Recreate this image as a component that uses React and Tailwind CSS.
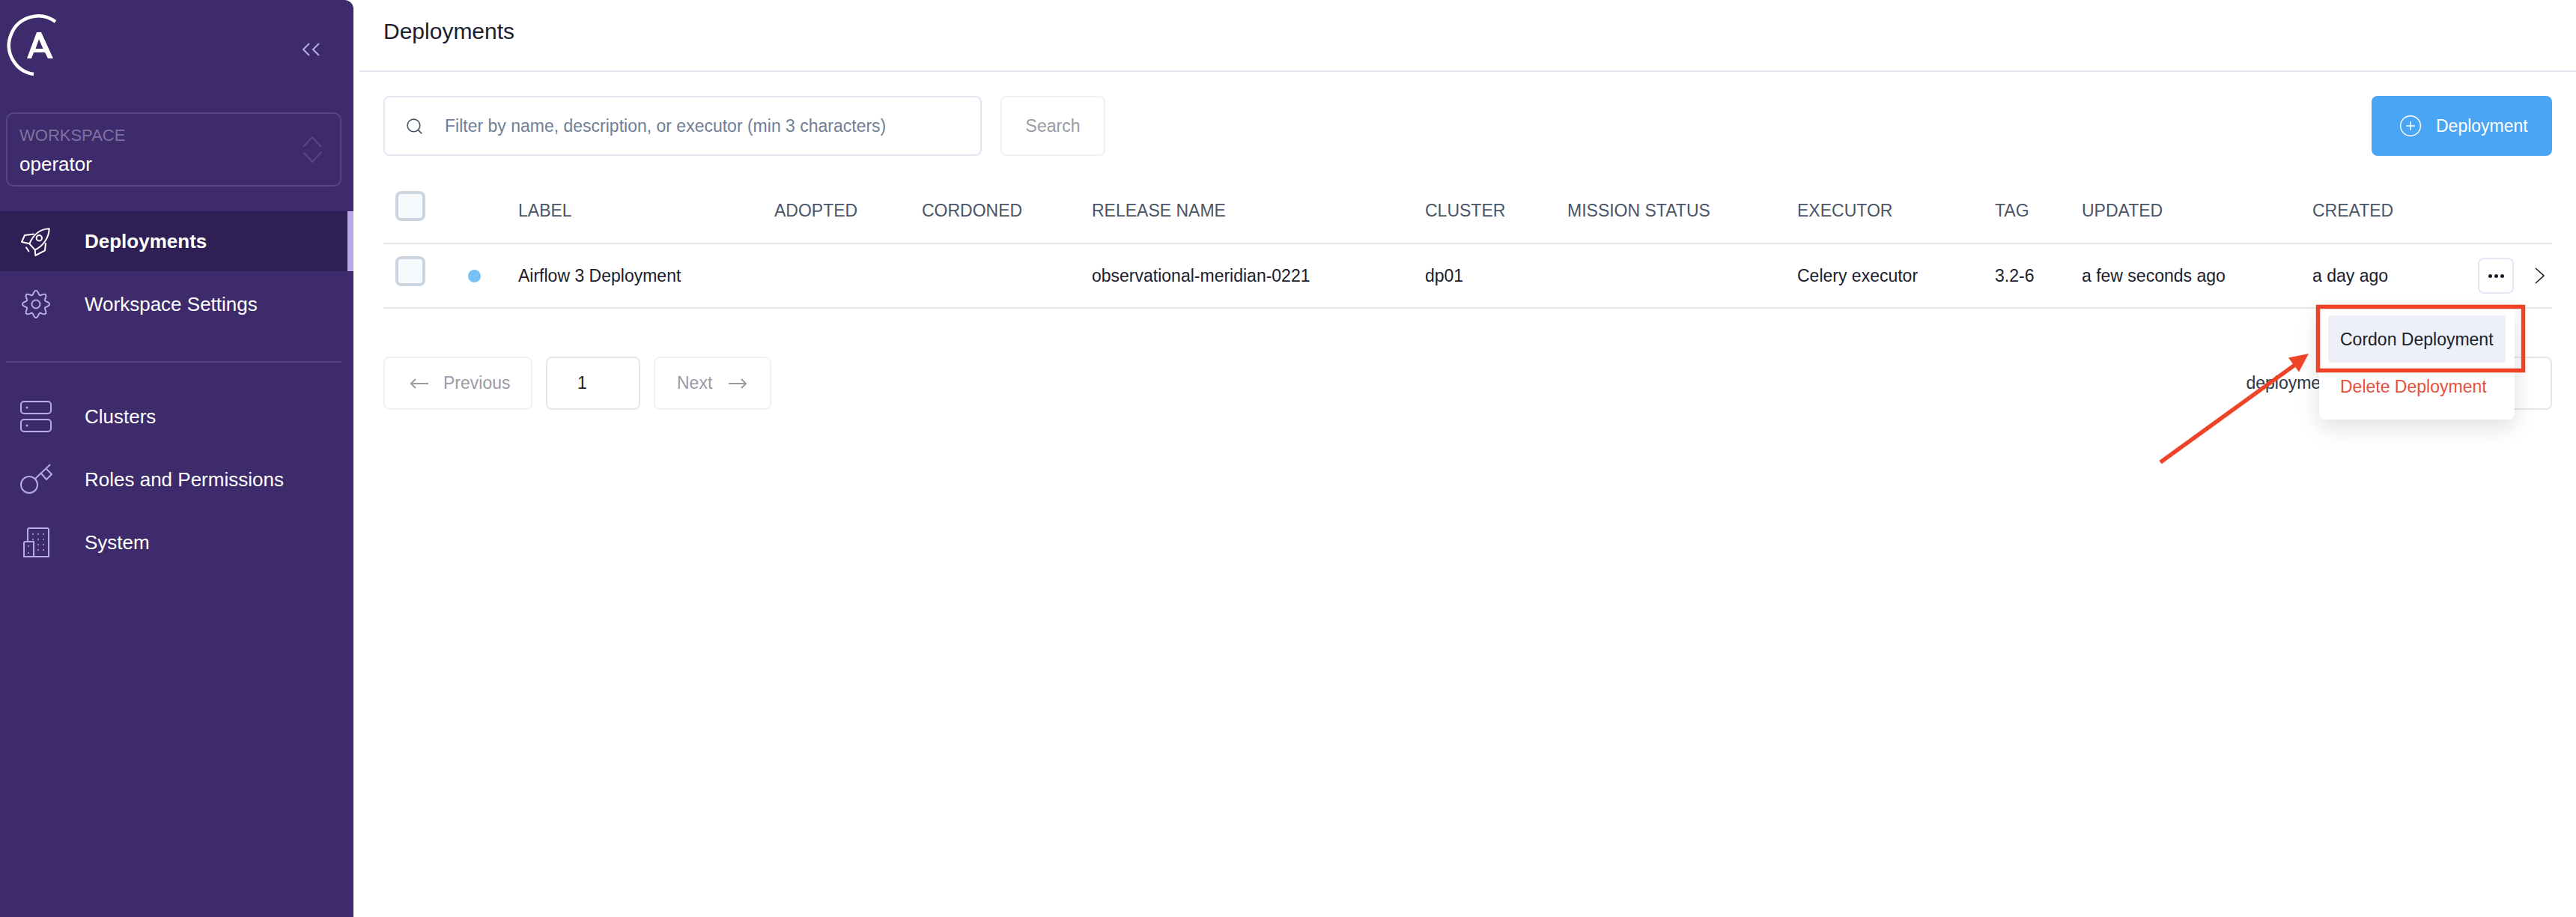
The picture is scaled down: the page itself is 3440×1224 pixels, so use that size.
// Deployments list page with the row menu open and a red callout on "Cordon Deployment".
import { CirclePlus, Search } from 'lucide-react';

const COLS = 'grid grid-cols-[180px_342px_197px_227px_445px_190px_307px_264px_116px_308px_1fr] items-center';

const HEADERS = ['LABEL', 'ADOPTED', 'CORDONED', 'RELEASE NAME', 'CLUSTER', 'MISSION STATUS', 'EXECUTOR', 'TAG', 'UPDATED', 'CREATED'];

const ROW = ['Airflow 3 Deployment', '', '', 'observational-meridian-0221', 'dp01', '', 'Celery executor', '3.2-6', 'a few seconds ago'];

// eight soft lobes around a centre, sampled into a closed path
const GEAR_PATH = (() => {
    const pts = [];
    for (let i = 0; i < 96; i++) {
        const a = (i / 96) * Math.PI * 2 - Math.PI / 2;
        const r = 15.5 + 2.6 * Math.cos(8 * (a + Math.PI / 2));
        pts.push(`${(22 + r * Math.cos(a)).toFixed(2)} ${(22 + r * Math.sin(a)).toFixed(2)}`);
    }
    return `M${pts.join('L')}Z`;
})();

function Logo() {
    return (
        <svg width="90" height="132" viewBox="0 0 90 132" fill="none">
            <path d="M74 29A39 39 0 1 0 45 99" stroke="white" strokeWidth="4.5" />
            <path
                fill="white"
                fillRule="evenodd"
                d="M49 43H55L71 78H64L60 70H45L42 78H36ZM47.5 65H57.5L52 52.5Z"
            />
        </svg>
    );
}

function RocketIcon() {
    return (
        <svg width="44" height="44" viewBox="-2 -2 44 44" fill="none" stroke="white" strokeWidth="2" strokeLinejoin="round" strokeLinecap="round">
            <path d="M37.7 3.3C27 3.5 17 10 11.3 23.3L18.7 31.7C30 26 37.5 15 37.7 3.3Z" />
            <path d="M17 10.5L5 12L1 21L11.3 23.3" />
            <path d="M18.7 31.7L19.3 39L32 32.3L33 23" />
            <path d="M7 28.3L10.3 33.3" />
            <circle cx="24.3" cy="15.7" r="3.7" />
        </svg>
    );
}

function GearIcon() {
    return (
        <svg width="44" height="44" viewBox="0 0 44 44" fill="none" stroke="#b9a9e6" strokeWidth="2">
            <path d={GEAR_PATH} />
            <circle cx="22" cy="22" r="5.5" />
        </svg>
    );
}

function ClustersIcon() {
    return (
        <svg width="44" height="44" viewBox="0 0 44 44" fill="none" stroke="#b9a9e6" strokeWidth="2">
            <rect x="2" y="2" width="40" height="16" rx="4" />
            <rect x="2" y="26" width="40" height="16" rx="4" />
            <circle cx="10" cy="10" r="0.6" fill="#b9a9e6" />
            <circle cx="10" cy="34" r="0.6" fill="#b9a9e6" />
        </svg>
    );
}

function KeyIcon() {
    return (
        <svg width="44" height="44" viewBox="0 0 44 44" fill="none" stroke="#b9a9e6" strokeWidth="2">
            <circle cx="13" cy="29" r="11" />
            <path d="M21 21L41 2" />
            <path d="M29 14L36 22L43 15L36 8" />
        </svg>
    );
}

function SystemIcon() {
    const dots = [
        [18, 11], [25, 11], [32, 11], [18, 18], [25, 18], [32, 18],
        [25, 25], [32, 25], [25, 32], [32, 32], [12, 27], [12, 36],
    ];
    return (
        <svg width="44" height="44" viewBox="0 0 44 44" fill="none" stroke="#b9a9e6" strokeWidth="2">
            <path d="M11 21V5Q11 3 13 3H37Q39 3 39 5V41H6V23Q6 21 8 21H19V41" />
            {dots.map(([x, y]) => (
                <circle key={`${x}-${y}`} cx={x} cy={y} r="1" fill="#b9a9e6" stroke="none" />
            ))}
        </svg>
    );
}

function NavItem({ icon, label, active = false }) {
    return (
        <div className={`relative flex h-[80px] items-center pl-[26px] text-[26px] text-white ${active ? 'bg-[#2e2054] font-bold' : ''}`}>
            {icon}
            <span className="ml-[43px]">{label}</span>
            {active && <div className="absolute right-0 top-0 h-full w-2 bg-[#b9a9e6]" />}
        </div>
    );
}

function Checkbox() {
    return <div className="mb-3 ml-[16px] h-10 w-10 rounded-lg border-4 border-[#cbd5e0] bg-[#f7fafc]" />;
}

function PageArrow({ flip = false }) {
    return (
        <svg width="24" height="14" viewBox="0 0 24 14" fill="none" stroke="#9a9aa5" strokeWidth="2" className={flip ? 'rotate-180' : ''}>
            <path d="M24 7H1M7 1L1 7L7 13" />
        </svg>
    );
}

export default function App() {
    return (
        <div className="relative flex h-screen w-full overflow-hidden bg-white font-['Liberation_Sans',Arial,sans-serif] text-[23px] text-[#1a202c]">
            <aside className="flex w-[472px] shrink-0 flex-col rounded-tr-xl bg-[#3d2b6b]">
                <div className="flex h-[132px] items-center justify-between pr-[44px]">
                    <Logo />
                    <svg width="24" height="20" viewBox="0 0 24 20" fill="none" stroke="#b9a9e6" strokeWidth="2">
                        <path d="M9 2L1 10L9 18M22 2L14 10L22 18" />
                    </svg>
                </div>
                <div className="ml-2 mr-4 mt-[18px] flex h-[99px] items-center justify-between rounded-[10px] border-2 border-[#58487f] pl-4 pr-[24px]">
                    <div>
                        <div className="text-[22px] leading-[38px] text-[#7f72a0]">WORKSPACE</div>
                        <div className="text-[26px] leading-[38px] text-white">operator</div>
                    </div>
                    <svg width="26" height="36" viewBox="0 0 26 36" fill="none" stroke="#58487f" strokeWidth="2">
                        <path d="M1 14L13 1L25 14M1 21L13 34L25 21" />
                    </svg>
                </div>
                <nav className="mt-[33px] flex flex-col gap-1">
                    <NavItem active icon={<RocketIcon />} label="Deployments" />
                    <NavItem icon={<GearIcon />} label="Workspace Settings" />
                </nav>
                <div className="ml-2 mr-4 mt-9 h-0.5 bg-[#58487f]" />
                <nav className="mt-8 flex flex-col gap-1">
                    <NavItem icon={<ClustersIcon />} label="Clusters" />
                    <NavItem icon={<KeyIcon />} label="Roles and Permissions" />
                    <NavItem icon={<SystemIcon />} label="System" />
                </nav>
            </aside>

            <main className="min-w-0 flex-1 pl-2">
                <header className="flex h-[96px] items-center border-b-2 border-[#e2e8f0] pb-3 pl-8 text-[30px]">
                    Deployments
                </header>
                <div className="px-8 pt-8">
                    <div className="flex h-20 items-center">
                        <div className="flex h-20 w-[799px] items-center rounded-lg border-2 border-[#e2e8f0] pl-[27px]">
                            <Search size={25} strokeWidth={1.5} className="text-[#4a5568]" />
                            <span className="ml-[28px] text-[#718096]">Filter by name, description, or executor (min 3 characters)</span>
                        </div>
                        <button className="ml-[25px] h-20 w-[140px] rounded-lg border-2 border-[#edf2f7] text-[#9a9ba3]">Search</button>
                        <button className="ml-auto flex h-20 w-[241px] items-center rounded-lg bg-[#4aa5f5] pl-[36px] text-white">
                            <CirclePlus size={32} strokeWidth={1.1} />
                            <span className="ml-[18px]">Deployment</span>
                        </button>
                    </div>

                    <div className={`${COLS} mt-[30px] h-[88px] border-b-2 border-[#e2e8f0] text-[#4a5568]`}>
                        <Checkbox />
                        {HEADERS.map(h => <div key={h}>{h}</div>)}
                    </div>

                    <div className={`${COLS} relative h-[86px] border-b-2 border-[#e2e8f0]`}>
                        <div className="flex items-center">
                            <Checkbox />
                            <div className="ml-[57px] h-[17px] w-[17px] rounded-full bg-[#76c0f7]" />
                        </div>
                        {ROW.map((cell, i) => <div key={i}>{cell}</div>)}
                        <div className="flex items-center">
                            <span>a day ago</span>
                            <button className="ml-auto flex h-12 w-12 items-center justify-center gap-[3px] rounded-lg border-2 border-[#e2e8f0]">
                                <span className="h-[5px] w-[5px] rounded-full bg-[#1a202c]" />
                                <span className="h-[5px] w-[5px] rounded-full bg-[#1a202c]" />
                                <span className="h-[5px] w-[5px] rounded-full bg-[#1a202c]" />
                            </button>
                            <svg width="13" height="22" viewBox="0 0 13 22" fill="none" stroke="#1a202c" strokeWidth="1.6" className="ml-[28px] mr-[10px]">
                                <path d="M1 1L12 11L1 21" />
                            </svg>
                        </div>

                        <div className="absolute right-[50px] top-[84px] z-10 h-[150px] w-[261px] rounded-lg bg-white px-3 pt-[11px] shadow-[0_10px_30px_rgba(0,0,0,0.13)]">
                            <div className="flex h-[63px] items-center rounded bg-[#edf0f6] pl-4 pt-[2px]">Cordon Deployment</div>
                            <div className="flex h-[64px] items-center pl-4 text-[#e4503d]">Delete Deployment</div>
                        </div>
                    </div>

                    <div className="mt-16 flex items-center justify-between">
                        <div className="flex gap-[18px]">
                            <button className="flex h-[71px] w-[199px] items-center rounded-lg border-2 border-[#edf2f7] pl-[34px] text-[#9a9aa5]">
                                <PageArrow />
                                <span className="ml-[20px]">Previous</span>
                            </button>
                            <div className="flex h-[71px] w-[126px] items-center rounded-lg border-2 border-[#e2e8f0] pl-[40px]">1</div>
                            <button className="flex h-[71px] w-[157px] items-center rounded-lg border-2 border-[#edf2f7] pl-[29px] text-[#9a9aa5]">
                                <span>Next</span>
                                <span className="ml-[22px]"><PageArrow flip /></span>
                            </button>
                        </div>
                        <div className="flex items-center gap-4 text-[#2d3748]">
                            <span>deployments per page</span>
                            <div className="h-[71px] w-[165px] rounded-lg border-2 border-[#e2e8f0]" />
                        </div>
                    </div>
                </div>
            </main>

            {/* red callout drawn over the page */}
            <svg className="pointer-events-none absolute left-0 top-0 z-20" width="3440" height="1224" fill="none">
                <rect x="3095.5" y="409.5" width="274" height="85" stroke="#ee4327" strokeWidth="5.5" />
                <path d="M2885 617L3066 486" stroke="#ee4327" strokeWidth="5.5" />
                <path d="M3056 477.6L3083 472L3070 496.6Z" fill="#ee4327" />
            </svg>
        </div>
    );
}
